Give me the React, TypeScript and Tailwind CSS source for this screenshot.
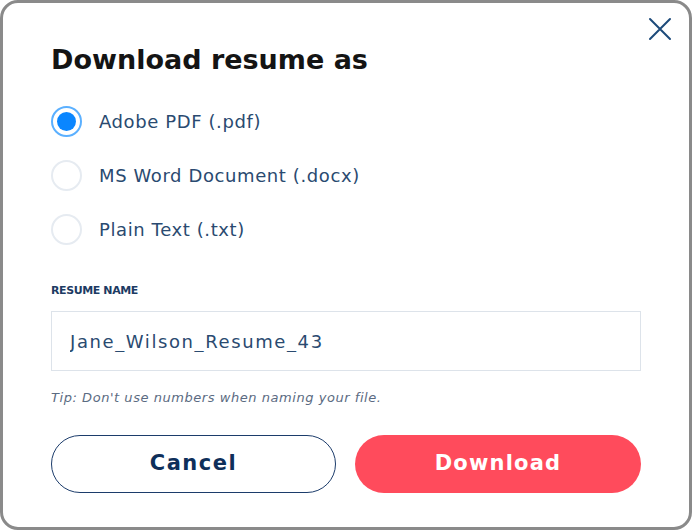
import { useState } from "react"

const options = [
  { id: "pdf", label: "Adobe PDF (.pdf)" },
  { id: "docx", label: "MS Word Document (.docx)" },
  { id: "txt", label: "Plain Text (.txt)" },
]

export default function App() {
  const [format, setFormat] = useState("pdf")
  const [name, setName] = useState("Jane_Wilson_Resume_43")

  return (
    <div className="w-[692px] h-[530px] bg-white" style={{ fontFamily: "'DejaVu Sans', sans-serif" }}>
      <div className="relative w-full h-full border-[3px] border-[#8a8a8a] rounded-[18px] px-[48px] pt-[41px]">
        {/* close */}
        <button className="absolute top-[14px] right-[17px] w-[24px] h-[24px] text-[#1d4a7a]" aria-label="Close">
          <svg viewBox="0 0 24 24" width="24" height="24" fill="none" stroke="currentColor" strokeWidth="2" strokeLinecap="round">
            <path d="M2 2L22 22M22 2L2 22" />
          </svg>
        </button>

        <h2 className="text-[27px] leading-[32px] font-bold text-[#141414]">Download resume as</h2>

        <div className="mt-[29px] flex flex-col gap-[22px]">
          {options.map((o) => {
            const on = format === o.id
            return (
              <label key={o.id} className="flex items-center h-[32px] cursor-pointer" onClick={() => setFormat(o.id)}>
                <span
                  className={
                    on
                      ? "w-[31px] h-[31px] rounded-full border-2 border-[#5bb0ff] flex items-center justify-center"
                      : "w-[31px] h-[31px] rounded-full border-2 border-[#e6ebf1]"
                  }
                >
                  {on && <span className="w-[19px] h-[19px] rounded-full bg-[#0a86ff]" />}
                </span>
                <span className="ml-[17px] text-[18px] tracking-[0.6px] text-[#2a4a70]">{o.label}</span>
              </label>
            )
          })}
        </div>

        <div className="mt-[38px] text-[11px] leading-[16px] font-bold tracking-[-0.4px] text-[#1d3b63]">RESUME NAME</div>
        <input
          value={name}
          onChange={(e) => setName(e.target.value)}
          className="mt-[12px] w-[590px] h-[60px] border border-[#dde3ea] px-[18px] text-[18px] tracking-[1.6px] text-[#2a4a70] outline-none"
        />
        <p className="mt-[19px] text-[13px] leading-[16px] italic tracking-[0.55px] text-[#5b6b82]">
          Tip: Don't use numbers when naming your file.
        </p>

        <div className="mt-[29px] flex gap-[19px]">
          <button className="w-[285px] h-[58px] rounded-full border border-[#1c3c6b] text-[21px] font-bold tracking-[1.5px] text-[#0e2f5a]">
            Cancel
          </button>
          <button className="w-[286px] h-[58px] rounded-full bg-[#ff4b5c] text-[21px] font-bold tracking-[1.2px] text-white">
            Download
          </button>
        </div>
      </div>
    </div>
  )
}
